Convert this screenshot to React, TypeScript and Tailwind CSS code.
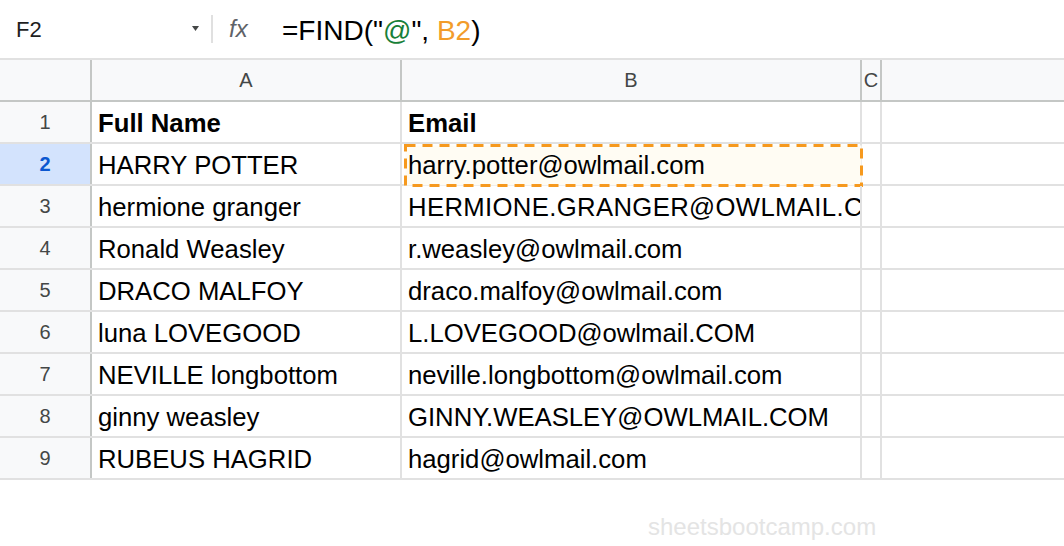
const rows: { name: string; email: string }[] = [
  { name: "Full Name", email: "Email" },
  { name: "HARRY POTTER", email: "harry.potter@owlmail.com" },
  { name: "hermione granger", email: "HERMIONE.GRANGER@OWLMAIL.COM" },
  { name: "Ronald Weasley", email: "r.weasley@owlmail.com" },
  { name: "DRACO MALFOY", email: "draco.malfoy@owlmail.com" },
  { name: "luna LOVEGOOD", email: "L.LOVEGOOD@owlmail.COM" },
  { name: "NEVILLE longbottom", email: "neville.longbottom@owlmail.com" },
  { name: "ginny weasley", email: "GINNY.WEASLEY@OWLMAIL.COM" },
  { name: "RUBEUS HAGRID", email: "hagrid@owlmail.com" },
];

function FormulaBar() {
  return (
    <div className="flex h-[58px] items-center bg-white">
      <div className="w-[192px] pl-4 text-[22px] text-[#1f1f1f]">F2</div>
      <svg width="7" height="5" viewBox="0 0 7 5" className="mt-[-2px]">
        <path d="M0 0 L7 0 L3.5 5 Z" fill="#444746" />
      </svg>
      <div className="ml-[12px] h-[28px] w-[2px] bg-[#e0e0e0]" />
      <div className="ml-[16px] w-[53px] text-[24px] italic text-[#5f6368]">fx</div>
      <div className="mt-[3px] text-[28px] text-black">
        =FIND("<span className="text-[#188038]">@</span>",{" "}
        <span className="text-[#f29c2b]">B2</span>)
      </div>
    </div>
  );
}

function HeaderRow() {
  return (
    <div className="flex h-[44px] border-t-2 border-b-2 border-t-[#e1e1e1] border-b-[#c4c7c5] bg-[#f8f9fa] text-[20px] text-[#444746]">
      <div className="w-[92px] border-r-2 border-[#c4c7c5]" />
      <div className="flex w-[310px] items-center justify-center border-r-2 border-[#c4c7c5]">A</div>
      <div className="flex w-[460px] items-center justify-center border-r-2 border-[#c4c7c5]">B</div>
      <div className="flex w-[20px] items-center justify-center overflow-hidden border-r-2 border-[#c4c7c5]">C</div>
      <div className="flex-1" />
    </div>
  );
}

// dashed "copy" marquee around B2
function Selection() {
  return (
    <svg
      width="459"
      height="43"
      className="pointer-events-none absolute left-[2px] top-0"
    >
      <rect
        x="1.5"
        y="1.5"
        width="456"
        height="40"
        fill="#fffcf3"
        stroke="#f6991e"
        strokeWidth="3"
        strokeDasharray="10 7"
      />
    </svg>
  );
}

export default function App() {
  return (
    <div className="h-[546px] w-[1064px] overflow-hidden bg-white font-['Liberation_Sans',Arial,sans-serif]">
      <FormulaBar />
      <HeaderRow />
      {rows.map((r, i) => {
        const n = i + 1;
        const active = n === 2;
        const bold = n === 1 ? "font-bold" : "";
        // long value overflows into C in Sheets' clip; widen a touch so it clips on the C like the original
        const wide = n === 3 ? "tracking-[0.35px]" : "";
        return (
          <div key={n} className="flex h-[42px] border-b-2 border-[#e1e1e1] text-[25.7px] text-black">
            <div
              className={
                active
                  ? "flex w-[92px] items-center justify-center border-r-2 border-[#c4c7c5] bg-[#d3e3fd] text-[20px] font-bold text-[#0b57d0]"
                  : "flex w-[92px] items-center justify-center border-r-2 border-[#c4c7c5] bg-[#f8f9fa] text-[20px] text-[#444746]"
              }
            >
              {n}
            </div>
            <div className="flex w-[310px] items-center overflow-hidden whitespace-nowrap border-r-2 border-[#e1e1e1] pl-[6px] pt-[3px]">
              <span className={bold}>{r.name}</span>
            </div>
            <div className="relative flex w-[460px] items-center whitespace-nowrap border-r-2 border-[#e1e1e1]">
              {active && <Selection />}
              <span className={`relative mt-[3px] block w-[458px] overflow-hidden pl-[6px] ${bold} ${wide}`}>{r.email}</span>
            </div>
            <div className="w-[20px] border-r-2 border-[#e1e1e1]" />
            <div className="flex-1" />
          </div>
        );
      })}
      <div className="flex h-[66px] items-end justify-start pb-[1px] pl-[648px]">
        <span className="text-[24px] text-[#e4e4e4]">sheetsbootcamp.com</span>
      </div>
    </div>
  );
}
